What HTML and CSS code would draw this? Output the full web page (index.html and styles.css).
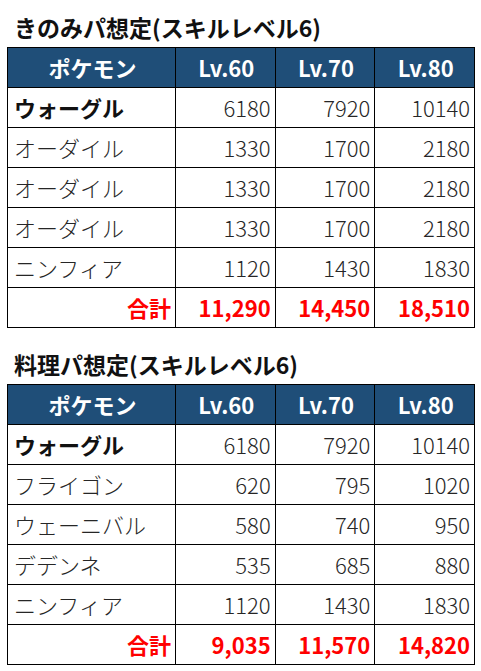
FILE: index.html
```html
<!DOCTYPE html>
<html lang="ja">
<head>
<meta charset="utf-8">
<link rel="stylesheet" href="styles.css">
</head>
<body>
<div class="page">
  <section class="block">
    <h2 class="title">きのみパ想定(スキルレベル6)</h2>
    <table class="tbl">
      <thead>
        <tr><th class="c-name">ポケモン</th><th>Lv.60</th><th>Lv.70</th><th>Lv.80</th></tr>
      </thead>
      <tbody>
        <tr><td class="name strong">ウォーグル</td><td>6180</td><td>7920</td><td>10140</td></tr>
        <tr><td class="name">オーダイル</td><td>1330</td><td>1700</td><td>2180</td></tr>
        <tr><td class="name">オーダイル</td><td>1330</td><td>1700</td><td>2180</td></tr>
        <tr><td class="name">オーダイル</td><td>1330</td><td>1700</td><td>2180</td></tr>
        <tr><td class="name">ニンフィア</td><td>1120</td><td>1430</td><td>1830</td></tr>
        <tr class="total"><td>合計</td><td>11,290</td><td>14,450</td><td>18,510</td></tr>
      </tbody>
    </table>
  </section>
  <section class="block second">
    <h2 class="title">料理パ想定(スキルレベル6)</h2>
    <table class="tbl">
      <thead>
        <tr><th class="c-name">ポケモン</th><th>Lv.60</th><th>Lv.70</th><th>Lv.80</th></tr>
      </thead>
      <tbody>
        <tr><td class="name strong">ウォーグル</td><td>6180</td><td>7920</td><td>10140</td></tr>
        <tr><td class="name">フライゴン</td><td>620</td><td>795</td><td>1020</td></tr>
        <tr><td class="name">ウェーニバル</td><td>580</td><td>740</td><td>950</td></tr>
        <tr><td class="name">デデンネ</td><td>535</td><td>685</td><td>880</td></tr>
        <tr><td class="name">ニンフィア</td><td>1120</td><td>1430</td><td>1830</td></tr>
        <tr class="total"><td>合計</td><td>9,035</td><td>11,570</td><td>14,820</td></tr>
      </tbody>
    </table>
  </section>
</div>
</body>
</html>
```

FILE: styles.css
```css
html, body {
  margin: 0;
  padding: 0;
  background: #ffffff;
}
body {
  font-family: "Noto Sans CJK JP", "Noto Sans", sans-serif;
  color: #222222;
}
.page {
  padding: 7px 0 0 7px;
}
.block.second {
  margin-top: 16px;
}
.title {
  margin: 0;
  height: 40px;
  line-height: 40px;
  padding-left: 7px;
  font-size: 23px;
  font-weight: 700;
  color: #111111;
  white-space: nowrap;
}
.tbl {
  border-collapse: collapse;
  width: 468px;
  table-layout: fixed;
}
.tbl th, .tbl td {
  border: 1px solid #000000;
  height: 40px;
  padding: 0 4px 2px 6px;
  font-size: 22px;
  line-height: 1;
  white-space: nowrap;
  box-sizing: border-box;
}
.tbl th {
  background: #1f4e78;
  color: #ffffff;
  font-weight: 700;
  text-align: center;
}
.tbl th.c-name {
  width: 168px;
}
.tbl td {
  text-align: right;
  font-weight: 300;
  color: #262626;
}
.tbl td.name {
  text-align: left;
}
.tbl td.strong {
  font-weight: 700;
  color: #111111;
}
.tbl tr.total td {
  color: #ff0000;
  font-weight: 700;
}
```
